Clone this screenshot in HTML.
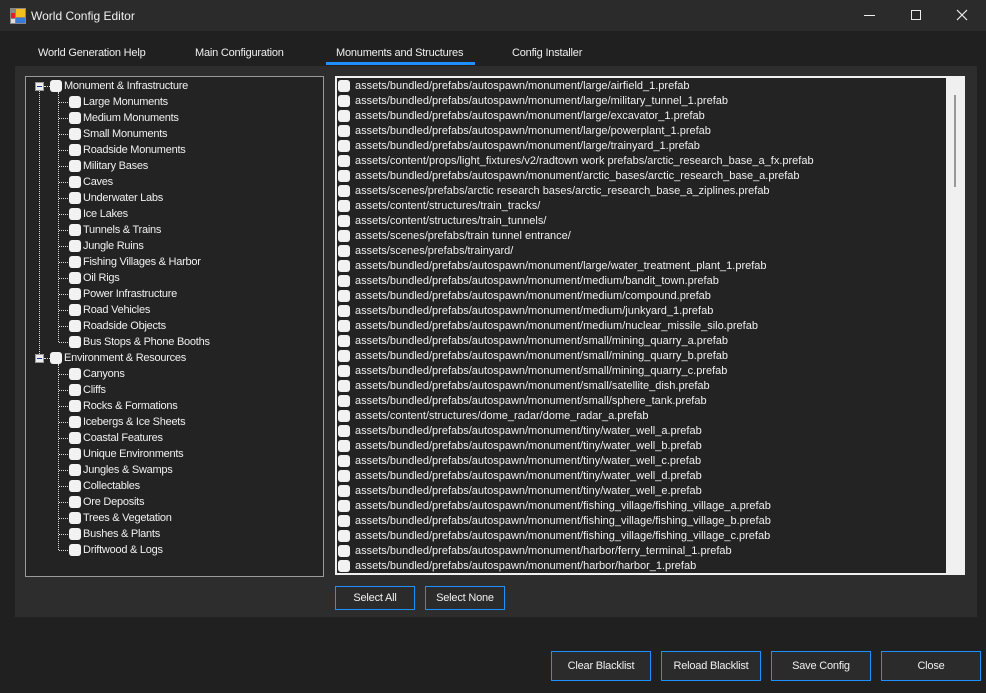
<!DOCTYPE html>
<html><head><style>
*{margin:0;padding:0;box-sizing:border-box}
body{width:986px;height:693px;background:#202020;font-family:"Liberation Sans",sans-serif;font-size:11px;color:#f0f0f0;position:relative;overflow:hidden}
.abs{position:absolute}
.title{left:0;top:0;width:986px;height:31px;background:#2b2b2b}
.tab{top:47px;font-size:11px;letter-spacing:-0.2px;color:#f0f0f0}
.panel{left:15px;top:66px;width:962px;height:551px;background:#2d2d2d}
.tree{left:25px;top:76px;width:299px;height:501px;border:1px solid #9a9a9a;background:#232323;letter-spacing:-0.25px}
.list{left:335px;top:76px;width:630px;height:499px;border:2px solid #f0f0f0;background:#232323}
.cb{position:absolute;width:12px;height:12px;background:#f2f2f2;border-radius:3px}
.t{position:absolute;white-space:nowrap;line-height:16px}
.btn{position:absolute;border:1px solid #1e90ff;background:#2b2b2b;color:#f0f0f0;text-align:center;font-size:11px;letter-spacing:-0.2px}
.dv{position:absolute;border-left:1px dotted #ddd;width:0}
.dh{position:absolute;border-top:1px dotted #ddd;height:0}
</style></head><body>
<div class="abs title"></div>
<svg class="abs" style="left:10px;top:8px" width="16" height="16"><rect x="0" y="0" width="16" height="16" fill="#888"/><rect x="6" y="1" width="9" height="8" fill="#f4c01e"/><rect x="1" y="5" width="4" height="5" fill="#d22"/><rect x="6" y="10" width="9" height="5" fill="#3a7bd5"/><rect x="1" y="11" width="4" height="4" fill="#ddd"/></svg>
<div class="abs" style="left:31px;top:9px;font-size:12px">World Config Editor</div>
<div class="abs" style="left:864px;top:15px;width:11px;height:1px;background:#eee"></div>
<div class="abs" style="left:911px;top:10px;width:10px;height:10px;border:1px solid #eee"></div>
<svg class="abs" style="left:956px;top:9px" width="12" height="12"><path d="M1 1L11 11M11 1L1 11" stroke="#eee" stroke-width="1.2"/></svg>

<div class="abs tab" style="left:38px">World Generation Help</div>
<div class="abs tab" style="left:195px">Main Configuration</div>
<div class="abs tab" style="left:336px">Monuments and Structures</div>
<div class="abs" style="left:326px;top:62px;width:149px;height:3px;background:#1e90ff"></div>
<div class="abs tab" style="left:512px">Config Installer</div>

<div class="abs panel"></div>
<div class="abs tree" id="tree"></div>
<div class="abs list" id="list"></div>
<div class="abs" style="left:946px;top:78px;width:17px;height:495px;background:#f0f0f0"></div>
<div class="abs" style="left:954px;top:95px;width:2px;height:92px;background:#999"></div>

<div class="btn" style="left:335px;top:586px;width:80px;height:24px;line-height:22px">Select All</div>
<div class="btn" style="left:425px;top:586px;width:80px;height:24px;line-height:22px">Select None</div>

<div class="btn" style="left:551px;top:651px;width:100px;height:30px;line-height:28px">Clear Blacklist</div>
<div class="btn" style="left:661px;top:651px;width:100px;height:30px;line-height:28px">Reload Blacklist</div>
<div class="btn" style="left:771px;top:651px;width:100px;height:30px;line-height:28px">Save Config</div>
<div class="btn" style="left:881px;top:651px;width:100px;height:30px;line-height:28px">Close</div>

<script>
var tree=document.getElementById('tree');
var groups=[["Monument & Infrastructure",["Large Monuments","Medium Monuments","Small Monuments","Roadside Monuments","Military Bases","Caves","Underwater Labs","Ice Lakes","Tunnels & Trains","Jungle Ruins","Fishing Villages & Harbor","Oil Rigs","Power Infrastructure","Road Vehicles","Roadside Objects","Bus Stops & Phone Booths"]],["Environment & Resources",["Canyons","Cliffs","Rocks & Formations","Icebergs & Ice Sheets","Coastal Features","Unique Environments","Jungles & Swamps","Collectables","Ore Deposits","Trees & Vegetation","Bushes & Plants","Driftwood & Logs"]]];
var h='',y=1;
groups.forEach(function(g,gi){
 var cy=y+8;
 h+='<div style="position:absolute;left:9px;top:'+(cy-4)+'px;width:9px;height:9px;border:1px solid #999;background:#eee"><div style="position:absolute;left:1px;top:3px;width:5px;height:1px;background:#1a3a9a"></div></div>';
 h+='<div class="dh" style="left:18px;top:'+cy+'px;width:6px"></div>';
 h+='<div class="cb" style="left:24px;top:'+(cy-6)+'px"></div><div class="t" style="left:38px;top:'+y+'px">'+g[0]+'</div>';
 if(gi==0){h+='<div class="dv" style="left:13px;top:'+(cy+5)+'px;height:'+(16*17-5)+'px"></div>';}
 var last=cy+16*g[1].length;
 h+='<div class="dv" style="left:32px;top:'+(cy+6)+'px;height:'+(last-cy-6)+'px"></div>';
 y+=16;
 g[1].forEach(function(c){var cc=y+8;
  h+='<div class="dh" style="left:33px;top:'+cc+'px;width:9px"></div><div class="cb" style="left:43px;top:'+(cc-6)+'px"></div><div class="t" style="left:57px;top:'+y+'px">'+c+'</div>';y+=16;});
});
tree.innerHTML=h;
var items=["assets/bundled/prefabs/autospawn/monument/large/airfield_1.prefab","assets/bundled/prefabs/autospawn/monument/large/military_tunnel_1.prefab","assets/bundled/prefabs/autospawn/monument/large/excavator_1.prefab","assets/bundled/prefabs/autospawn/monument/large/powerplant_1.prefab","assets/bundled/prefabs/autospawn/monument/large/trainyard_1.prefab","assets/content/props/light_fixtures/v2/radtown work prefabs/arctic_research_base_a_fx.prefab","assets/bundled/prefabs/autospawn/monument/arctic_bases/arctic_research_base_a.prefab","assets/scenes/prefabs/arctic research bases/arctic_research_base_a_ziplines.prefab","assets/content/structures/train_tracks/","assets/content/structures/train_tunnels/","assets/scenes/prefabs/train tunnel entrance/","assets/scenes/prefabs/trainyard/","assets/bundled/prefabs/autospawn/monument/large/water_treatment_plant_1.prefab","assets/bundled/prefabs/autospawn/monument/medium/bandit_town.prefab","assets/bundled/prefabs/autospawn/monument/medium/compound.prefab","assets/bundled/prefabs/autospawn/monument/medium/junkyard_1.prefab","assets/bundled/prefabs/autospawn/monument/medium/nuclear_missile_silo.prefab","assets/bundled/prefabs/autospawn/monument/small/mining_quarry_a.prefab","assets/bundled/prefabs/autospawn/monument/small/mining_quarry_b.prefab","assets/bundled/prefabs/autospawn/monument/small/mining_quarry_c.prefab","assets/bundled/prefabs/autospawn/monument/small/satellite_dish.prefab","assets/bundled/prefabs/autospawn/monument/small/sphere_tank.prefab","assets/content/structures/dome_radar/dome_radar_a.prefab","assets/bundled/prefabs/autospawn/monument/tiny/water_well_a.prefab","assets/bundled/prefabs/autospawn/monument/tiny/water_well_b.prefab","assets/bundled/prefabs/autospawn/monument/tiny/water_well_c.prefab","assets/bundled/prefabs/autospawn/monument/tiny/water_well_d.prefab","assets/bundled/prefabs/autospawn/monument/tiny/water_well_e.prefab","assets/bundled/prefabs/autospawn/monument/fishing_village/fishing_village_a.prefab","assets/bundled/prefabs/autospawn/monument/fishing_village/fishing_village_b.prefab","assets/bundled/prefabs/autospawn/monument/fishing_village/fishing_village_c.prefab","assets/bundled/prefabs/autospawn/monument/harbor/ferry_terminal_1.prefab","assets/bundled/prefabs/autospawn/monument/harbor/harbor_1.prefab"];
var l='';items.forEach(function(s,i){var y=i*15+1;l+='<div class="cb" style="left:1px;top:'+(y+1)+'px"></div><div class="t" style="left:18px;top:'+(y-1)+'px">'+s+'</div>';});
l+='<div class="cb" style="left:1px;top:'+(33*15+2)+'px"></div>';
document.getElementById('list').innerHTML='<div style="position:absolute;left:0;top:0;width:609px;height:495px;overflow:hidden">'+l+'</div>';
</script>
</body></html>
